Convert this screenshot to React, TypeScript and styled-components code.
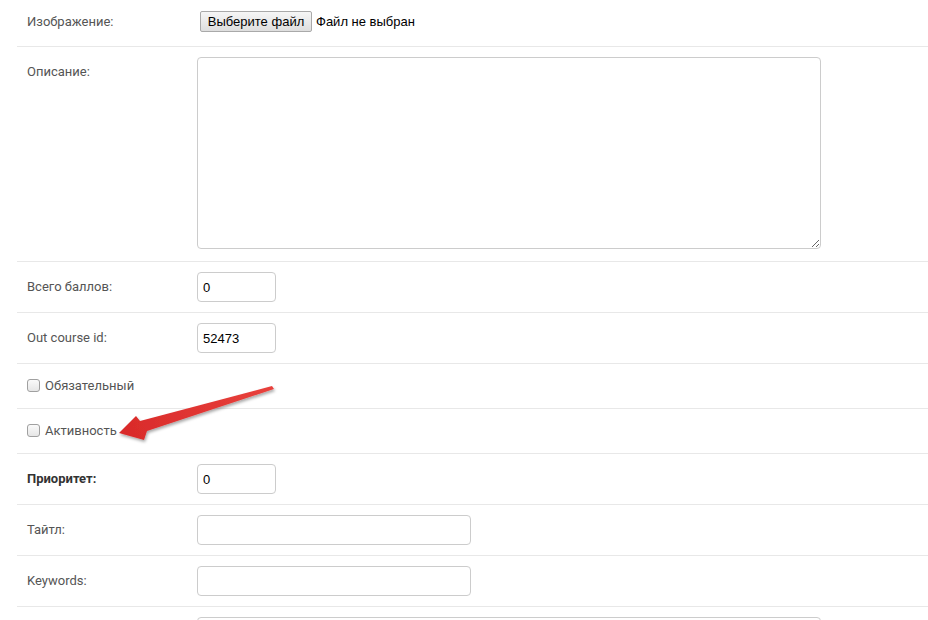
import React from "react";
import styled, { createGlobalStyle } from "styled-components";

const GlobalStyle = createGlobalStyle`
  html, body {
    margin: 0;
    padding: 0;
    background: #fff;
  }
  body {
    font-family: Roboto, "Liberation Sans", Arial, sans-serif;
    font-size: 13px;
    color: #555;
  }
`;

const Page = styled.div`
  position: relative;
  width: 928px;
  height: 620px;
  overflow: hidden;
  padding-left: 17px;
  box-sizing: border-box;
`;

const Row = styled.div<{ $first?: boolean; $top?: boolean }>`
  display: flex;
  align-items: ${(p) => (p.$top ? "flex-start" : "center")};
  border-top: ${(p) => (p.$first ? "none" : "1px solid #e8e8e8")};
  padding: ${(p) => (p.$first ? "11px 10px 14px" : "10px 10px")};
  box-sizing: border-box;
`;

const Label = styled.div<{ $bold?: boolean; $offset?: number }>`
  width: 170px;
  flex: none;
  line-height: 20px;
  font-weight: ${(p) => (p.$bold ? 700 : 400)};
  color: ${(p) => (p.$bold ? "#333" : "#555")};
  margin-top: ${(p) => p.$offset ?? 0}px;
`;

const Input = styled.input<{ $w: number }>`
  width: ${(p) => p.$w}px;
  height: 30px;
  box-sizing: border-box;
  border: 1px solid #ccc;
  border-radius: 4px;
  padding: 4px 5px;
  font-family: "Liberation Sans", Arial, sans-serif;
  font-size: 13px;
  color: #000;
  background: #fff;
  outline: none;
`;

const TextArea = styled.textarea`
  display: block;
  width: 624px;
  height: 192px;
  box-sizing: border-box;
  border: 1px solid #ccc;
  border-radius: 4px;
  margin-bottom: 2px;
  resize: both;
  outline: none;
`;

const FileWrap = styled.div`
  display: flex;
  align-items: center;
  gap: 4px;
  margin-left: 3px;
  font-family: "Liberation Sans", Arial, sans-serif;
  font-size: 13px;
  color: #000;
`;

const FileButton = styled.button`
  height: 21px;
  width: 112px;
  padding: 0 6px;
  border: 1px solid #a9a9a9;
  border-radius: 2px;
  background: linear-gradient(#f6f6f6, #dedede);
  font-family: "Liberation Sans", Arial, sans-serif;
  font-size: 13px;
  color: #000;
`;

const Check = styled.label`
  display: flex;
  align-items: center;
  gap: 5px;
  height: 24px;
  line-height: 20px;
  color: #555;
`;

const Box = styled.span`
  width: 11px;
  height: 11px;
  border: 1px solid #a0a0a0;
  border-radius: 3px;
  background: linear-gradient(#fafafa, #e6e6e6);
  margin-top: -1px;
`;

const Arrow = styled.svg`
  position: absolute;
  left: 0;
  top: 0;
  pointer-events: none;
`;

export default function App() {
  return (
    <>
      <GlobalStyle />
      <Page>
        <Row $first>
          <Label>Изображение:</Label>
          <FileWrap>
            <FileButton>Выберите файл</FileButton>
            <span>Файл не выбран</span>
          </FileWrap>
        </Row>
        <Row $top>
          <Label $offset={5}>Описание:</Label>
          <TextArea />
        </Row>
        <Row>
          <Label>Всего баллов:</Label>
          <Input $w={79} defaultValue="0" />
        </Row>
        <Row>
          <Label>Out course id:</Label>
          <Input $w={79} defaultValue="52473" />
        </Row>
        <Row>
          <Check>
            <Box />
            Обязательный
          </Check>
        </Row>
        <Row>
          <Check>
            <Box />
            Активность
          </Check>
        </Row>
        <Row>
          <Label $bold>Приоритет:</Label>
          <Input $w={79} defaultValue="0" />
        </Row>
        <Row>
          <Label>Тайтл:</Label>
          <Input $w={274} />
        </Row>
        <Row>
          <Label>Keywords:</Label>
          <Input $w={274} />
        </Row>
        <Row>
          <Label />
          <Input $w={624} />
        </Row>
        <Arrow width="928" height="620" viewBox="0 0 928 620">
          <defs>
            <linearGradient id="ar" x1="120" y1="432" x2="274" y2="388" gradientUnits="userSpaceOnUse">
              <stop offset="0" stopColor="#d92a2a" />
              <stop offset="1" stopColor="#e8413c" />
            </linearGradient>
            <filter id="sh" x="-20%" y="-40%" width="140%" height="180%">
              <feDropShadow dx="1" dy="2" stdDeviation="1.5" floodColor="#000" floodOpacity="0.35" />
            </filter>
          </defs>
          <polygon
            points="119,433 136,416 140,421 272,386 274,389 147,431 144,440"
            fill="url(#ar)"
            filter="url(#sh)"
          />
        </Arrow>
      </Page>
    </>
  );
}
